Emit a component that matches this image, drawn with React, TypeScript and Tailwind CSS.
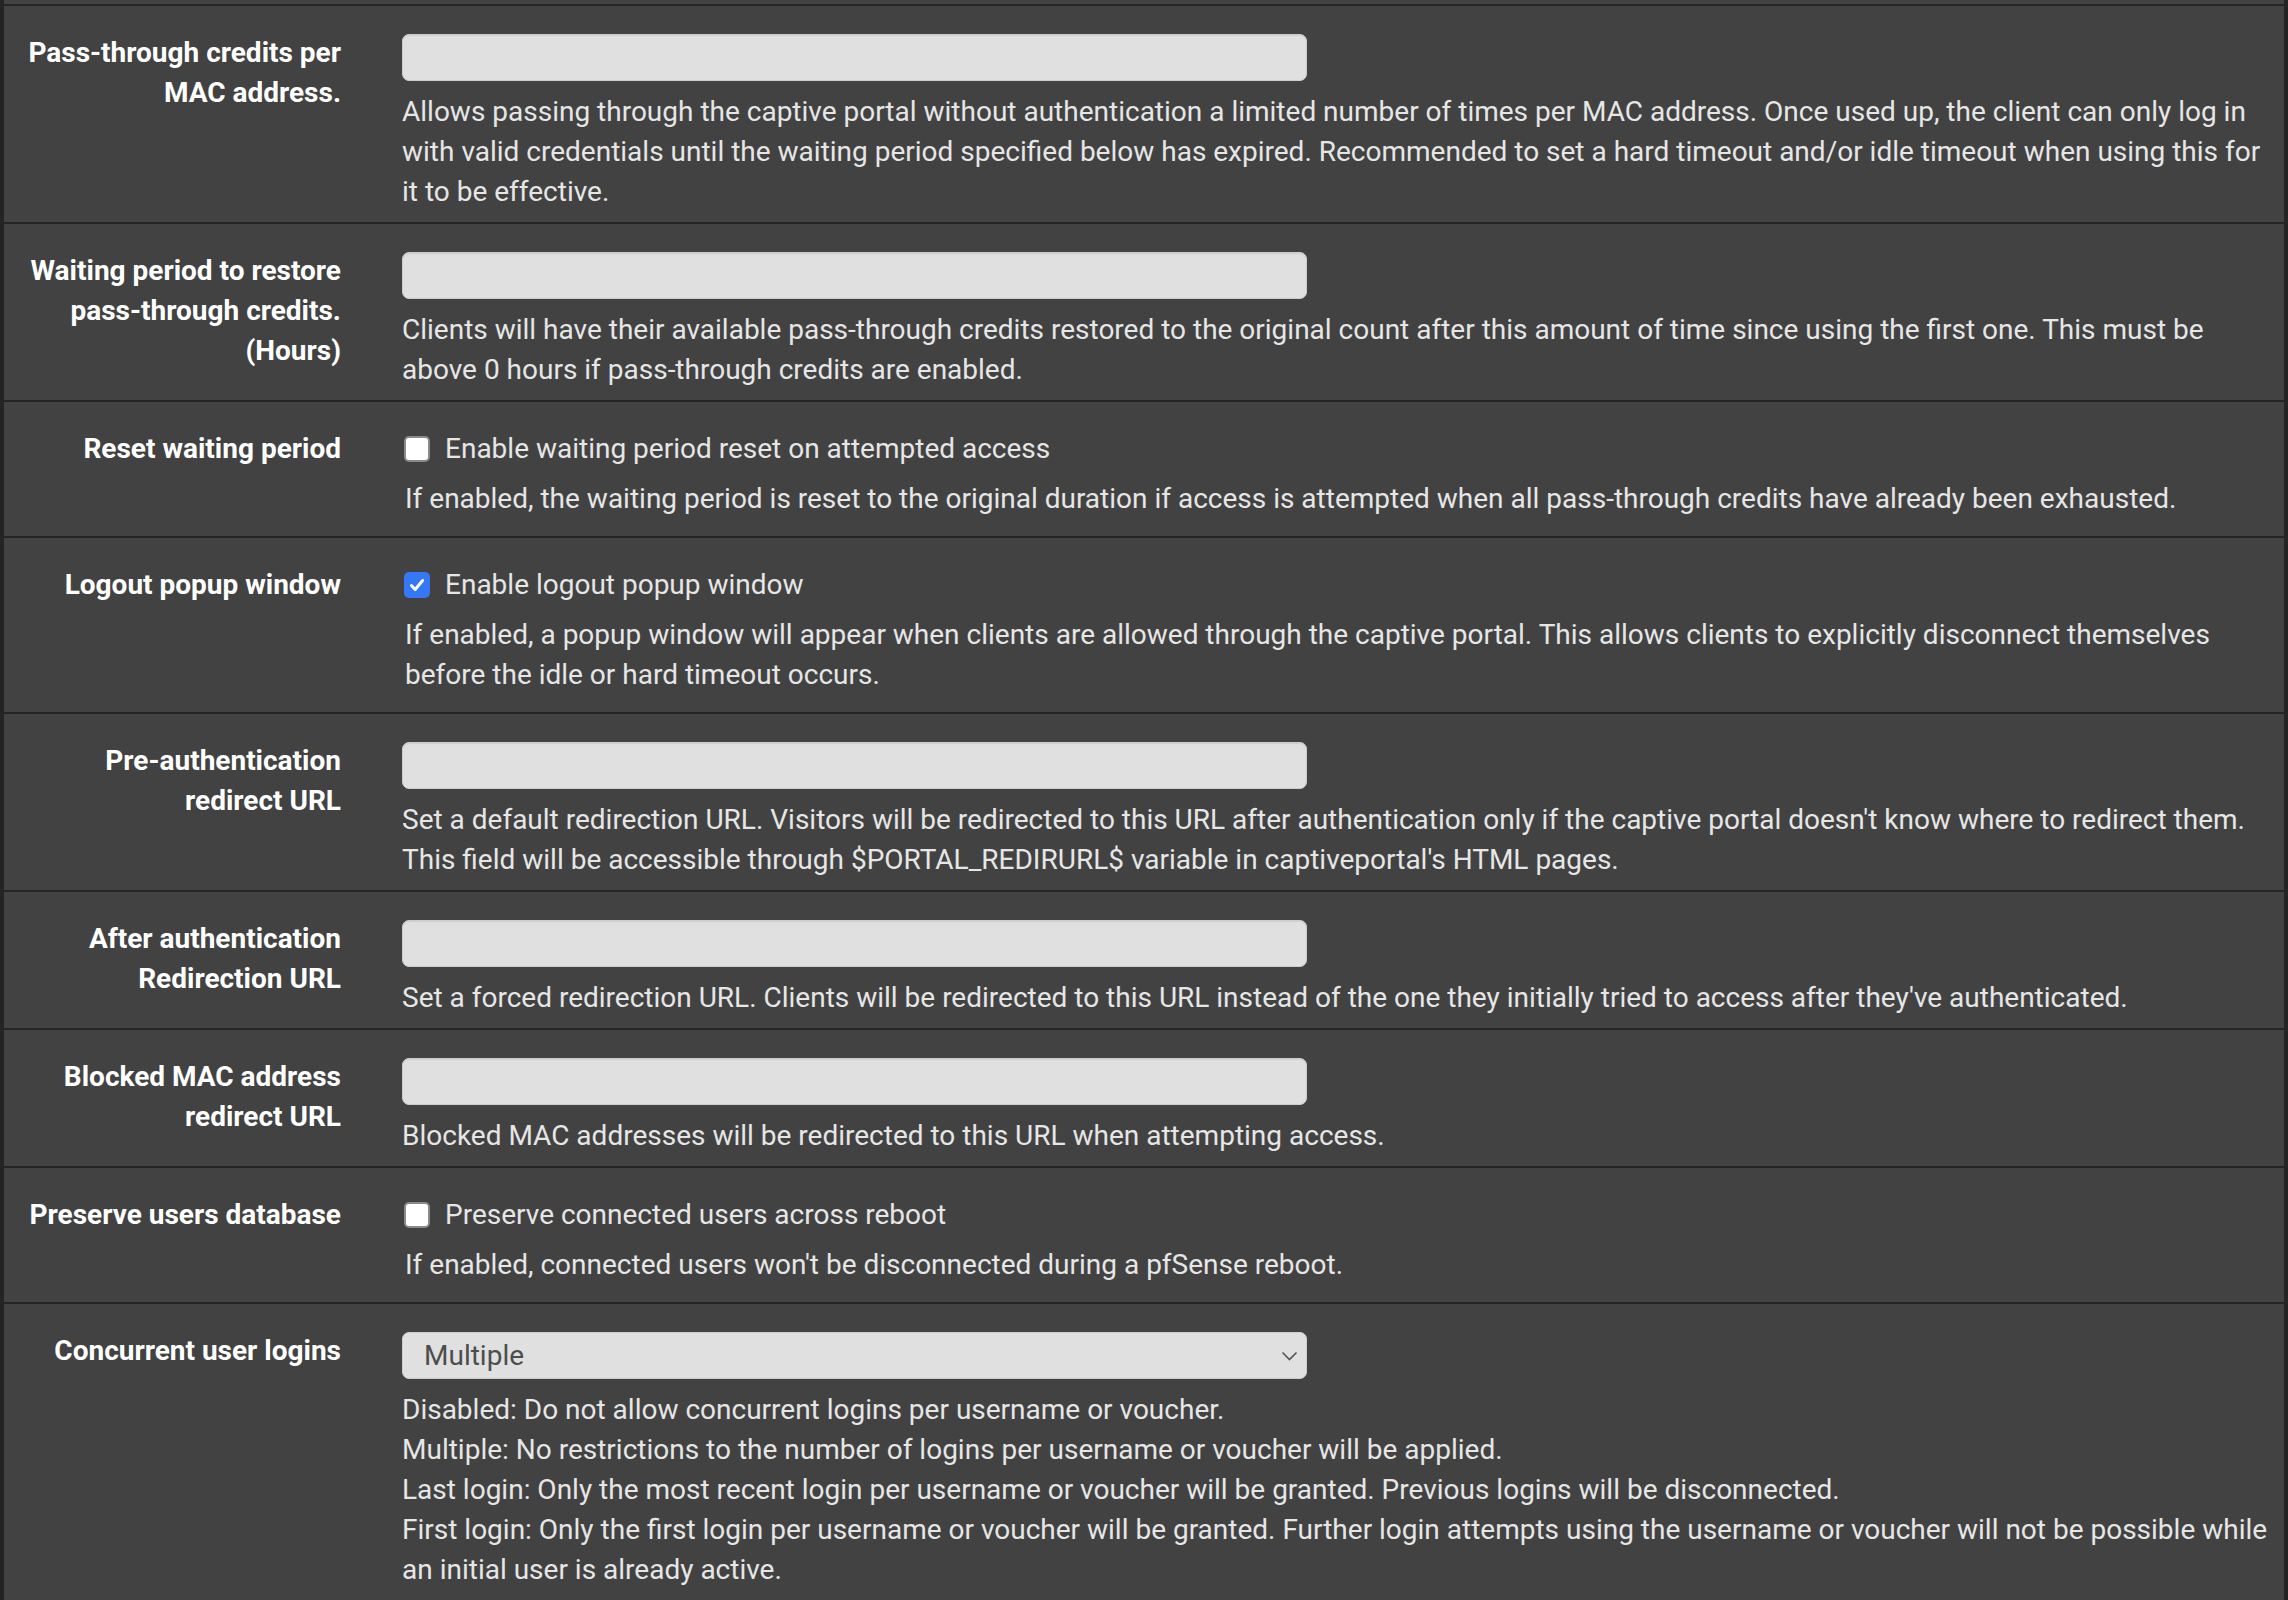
type Row =
  | { kind: 'input'; label: string; help: string[] }
  | { kind: 'check'; label: string; text: string; checked: boolean; help: string[] }
  | { kind: 'select'; label: string; value: string; help: string[] };

const rows: Row[] = [
  {
    kind: 'input',
    label: 'Pass-through credits per MAC address.',
    help: [
      'Allows passing through the captive portal without authentication a limited number of times per MAC address. Once used up, the client can only log in with valid credentials until the waiting period specified below has expired. Recommended to set a hard timeout and/or idle timeout when using this for it to be effective.',
    ],
  },
  {
    kind: 'input',
    label: 'Waiting period to restore pass-through credits. (Hours)',
    help: [
      'Clients will have their available pass-through credits restored to the original count after this amount of time since using the first one. This must be above 0 hours if pass-through credits are enabled.',
    ],
  },
  {
    kind: 'check',
    label: 'Reset waiting period',
    text: 'Enable waiting period reset on attempted access',
    checked: false,
    help: [
      'If enabled, the waiting period is reset to the original duration if access is attempted when all pass-through credits have already been exhausted.',
    ],
  },
  {
    kind: 'check',
    label: 'Logout popup window',
    text: 'Enable logout popup window',
    checked: true,
    help: [
      'If enabled, a popup window will appear when clients are allowed through the captive portal. This allows clients to explicitly disconnect themselves before the idle or hard timeout occurs.',
    ],
  },
  {
    kind: 'input',
    label: 'Pre-authentication redirect URL',
    help: [
      "Set a default redirection URL. Visitors will be redirected to this URL after authentication only if the captive portal doesn't know where to redirect them. This field will be accessible through $PORTAL_REDIRURL$ variable in captiveportal's HTML pages.",
    ],
  },
  {
    kind: 'input',
    label: 'After authentication Redirection URL',
    help: [
      "Set a forced redirection URL. Clients will be redirected to this URL instead of the one they initially tried to access after they've authenticated.",
    ],
  },
  {
    kind: 'input',
    label: 'Blocked MAC address redirect URL',
    help: ['Blocked MAC addresses will be redirected to this URL when attempting access.'],
  },
  {
    kind: 'check',
    label: 'Preserve users database',
    text: 'Preserve connected users across reboot',
    checked: false,
    help: ["If enabled, connected users won't be disconnected during a pfSense reboot."],
  },
  {
    kind: 'select',
    label: 'Concurrent user logins',
    value: 'Multiple',
    help: [
      'Disabled: Do not allow concurrent logins per username or voucher.',
      'Multiple: No restrictions to the number of logins per username or voucher will be applied.',
      'Last login: Only the most recent login per username or voucher will be granted. Previous logins will be disconnected.',
      'First login: Only the first login per username or voucher will be granted. Further login attempts using the username or voucher will not be possible while an initial user is already active.',
    ],
  },
];

function Checkbox({ checked }: { checked: boolean }) {
  if (checked) {
    return (
      <span className="flex h-[26px] w-[26px] shrink-0 items-center justify-center rounded-[5px] bg-[#3478f6]">
        <svg width="18" height="18" viewBox="0 0 16 16" fill="none">
          <path d="M3 8.5 6.4 12 13 4" stroke="white" strokeWidth="2.6" strokeLinecap="round" strokeLinejoin="round" />
        </svg>
      </span>
    );
  }
  return <span className="h-[26px] w-[26px] shrink-0 rounded-[5px] border-2 border-[#8a8a8a] bg-white" />;
}

function Help({ lines, className = '' }: { lines: string[]; className?: string }) {
  return (
    <div className={`text-[#e6e6e6] ${className}`}>
      {lines.map((l, i) => (
        <div key={i}>{l}</div>
      ))}
    </div>
  );
}

function FieldRow({ row }: { row: Row }) {
  const isCheck = row.kind === 'check';
  return (
    <div className={`flex bg-[#424242] ${isCheck ? 'pt-[27px] pb-[17px]' : 'pt-[27px] pb-[10px]'}`}>
      <div className="w-[398px] shrink-0 pl-[14px] pr-[61px] text-right font-bold text-white">{row.label}</div>
      <div className="min-w-0 flex-1 pr-[10px]">
        {row.kind === 'input' && (
          <>
            <div className="mt-[1px] h-[47px] w-[905px] rounded-[7px] border border-[#cdcdcd] bg-[#e0e0e0] shadow-[inset_0_1px_1px_rgba(0,0,0,0.08)]" />
            <Help lines={row.help} className="mt-[11px]" />
          </>
        )}
        {row.kind === 'select' && (
          <>
            <div className="mt-[1px] flex h-[47px] w-[905px] items-center justify-between rounded-[7px] border border-[#cdcdcd] bg-[#e0e0e0] pl-[21px] pr-[8px] text-[#4d4d4d]">
              <span>{row.value}</span>
              <svg width="17" height="10" viewBox="0 0 17 10" fill="none">
                <path d="M1.5 1.5 8.5 8.5l7-7" stroke="#555" strokeWidth="1.6" />
              </svg>
            </div>
            <Help lines={row.help} className="mt-[11px]" />
          </>
        )}
        {row.kind === 'check' && (
          <>
            <div className="ml-[2px] flex h-[40px] items-center gap-[15px] text-[#e6e6e6]">
              <Checkbox checked={row.checked} />
              <span>{row.text}</span>
            </div>
            <Help lines={row.help} className="ml-[3px] mt-[10px]" />
          </>
        )}
      </div>
    </div>
  );
}

export default function App() {
  return (
    <div className="min-h-[1600px] w-[2288px] overflow-hidden bg-[#242424] px-[4px] font-['Roboto','Liberation_Sans',sans-serif] text-[28px] leading-[40px]">
      <div className="flex flex-col gap-[2px]">
        <div className="h-[4px] bg-[#424242]" />
        {rows.map((r, i) => (
          <FieldRow key={i} row={r} />
        ))}
      </div>
    </div>
  );
}
